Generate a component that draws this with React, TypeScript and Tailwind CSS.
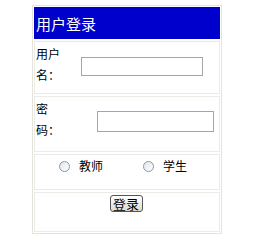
export default function App() {
  const font = { fontFamily: '"Noto Sans CJK SC", "Liberation Sans", sans-serif' }
  return (
    <div className="w-[264px] h-[247px] bg-white pt-[5px] pl-[32px]" style={font}>
      <div className="w-[190px] border border-[#e4e4dc] p-[1px] flex flex-col gap-[2px]">
        {/* 标题 */}
        <div className="h-[32px] bg-[#0000cc] flex items-center pl-[2px] text-white text-[15px] leading-none">
          用户登录
        </div>

        {/* 用户名 */}
        <div className="h-[53px] border border-[#ecece6] flex items-start">
          <div className="w-[46px] pl-[1px] pt-[1px] text-[12px] leading-[21px] text-black">
            <div>用户</div>
            <div>名：</div>
          </div>
          <input
            type="text"
            className="mt-[15px] w-[122px] h-[19px] border border-[#a5a5a5] bg-white outline-none"
          />
        </div>

        {/* 密码 */}
        <div className="h-[56px] border border-[#ecece6] flex items-start">
          <div className="w-[62px] pl-[1px] pt-[1px] text-[12px] leading-[21px] text-black">
            <div>密</div>
            <div>码：</div>
          </div>
          <input
            type="password"
            className="mt-[14px] w-[117px] h-[21px] border border-[#a5a5a5] bg-white outline-none"
          />
        </div>

        {/* 身份 */}
        <div className="h-[36px] border border-[#ecece6] flex items-start pt-[2px] text-[12px] text-black">
          <label className="flex items-center ml-[24px] gap-[9px]">
            <span className="w-[11px] h-[11px] rounded-full border border-[#8a96a6] bg-gradient-to-br from-[#dfe6ee] to-white" />
            <span className="leading-[18px]">教师</span>
          </label>
          <label className="flex items-center ml-[40px] gap-[9px]">
            <span className="w-[11px] h-[11px] rounded-full border border-[#8a96a6] bg-gradient-to-br from-[#dfe6ee] to-white" />
            <span className="leading-[18px]">学生</span>
          </label>
        </div>

        {/* 登录 */}
        <div className="h-[40px] border border-[#ecece6] flex justify-center items-start pt-[2px]">
          <button
            type="button"
            className="ml-[-2px] w-[33px] h-[17px] border border-[#555] rounded-[3px] bg-gradient-to-b from-white to-[#dcdcd4] text-[13px] leading-none text-black flex items-center justify-center"
          >
            登录
          </button>
        </div>
      </div>
    </div>
  )
}
